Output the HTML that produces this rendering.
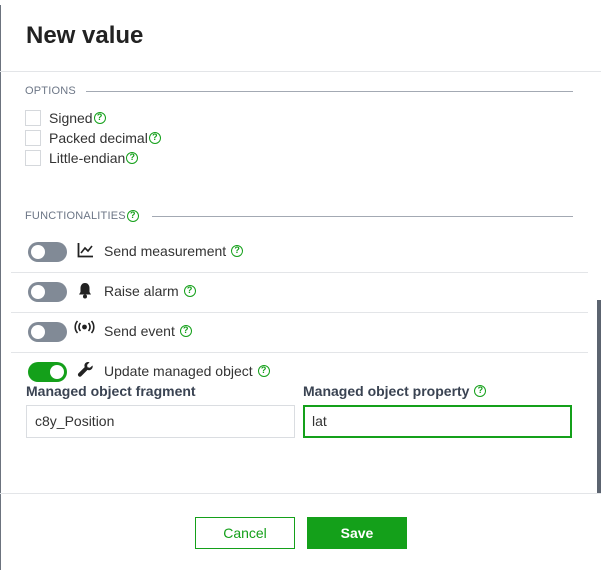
<!DOCTYPE html>
<html><head><meta charset="utf-8"><style>
*{box-sizing:border-box;margin:0;padding:0}
body{width:601px;height:570px;background:#fff;font-family:"Liberation Sans",sans-serif;color:#2b2b2b;position:relative;overflow:hidden}
.a{position:absolute}
.q{display:inline-block;width:12px;height:12px;border:1.3px solid #14a01a;border-radius:50%;color:#14a01a;font-size:9px;font-weight:bold;line-height:9.5px;text-align:center;vertical-align:top;margin-top:2px;margin-left:1px}
.cb{width:16px;height:16px;border:1px solid #d5d8dc}
.lab{font-size:14px;color:#333;line-height:16px}
.sec{font-size:11px;color:#6c7686;letter-spacing:.2px;line-height:14px}
.sec .q{margin-top:1px}
.hr{height:1px;background:#a3a9b3}
.sep{height:1px;background:#e3e5e8;left:11px;width:577px}
.tg{width:39px;height:20px;border-radius:10px;background:#818a96}
.tg::after{content:"";position:absolute;left:3px;top:3px;width:14px;height:14px;border-radius:50%;background:#fff}
.tg.on{background:#14a01a}
.tg.on::after{left:22px}
.bl{font-size:14px;font-weight:bold;color:#3a4352;line-height:16px}
.inp{height:33px;border:1px solid #dadde1;font-size:14px;padding:7px 8px;color:#333}
</style></head><body>
<div class="a" style="left:0;top:5px;width:1px;height:565px;background:#6c737e"></div>
<div class="a" style="left:26px;top:22px;font-size:24px;font-weight:bold;color:#222">New value</div>
<div class="a" style="left:0;top:71px;width:601px;height:1px;background:#e3e5e8"></div>

<div class="a sec" style="left:25px;top:84px">OPTIONS</div>
<div class="a hr" style="left:86px;top:91px;width:487px"></div>
<div class="a cb" style="left:25px;top:110px"></div><div class="a lab" style="left:49px;top:110px">Signed<span class="q">?</span></div>
<div class="a cb" style="left:25px;top:130px"></div><div class="a lab" style="left:49px;top:130px">Packed decimal<span class="q">?</span></div>
<div class="a cb" style="left:25px;top:150px"></div><div class="a lab" style="left:49px;top:150px">Little-endian<span class="q">?</span></div>

<div class="a sec" style="left:25px;top:209px">FUNCTIONALITIES<span class="q">?</span></div>
<div class="a hr" style="left:152px;top:216px;width:421px"></div>

<div class="a tg" style="left:28px;top:242px"></div>
<svg class="a" style="left:77px;top:242px" width="17" height="16" viewBox="0 0 17 16"><path d="M1.5 1v13.5H16" stroke="#222" stroke-width="1.8" fill="none"/><path d="M4 11l4-5 3 3 4-5" stroke="#222" stroke-width="1.6" fill="none"/></svg>
<div class="a lab" style="left:104px;top:243px">Send measurement <span class="q">?</span></div>
<div class="a sep" style="top:272px"></div>

<div class="a tg" style="left:28px;top:282px"></div>
<svg class="a" style="left:78px;top:282px" width="14" height="17" viewBox="0 0 14 17"><path d="M7 1c-3 0-4.5 2.5-4.5 5v4L1 12.5h12L11.5 10V6C11.5 3.5 10 1 7 1z" fill="#222"/><circle cx="7" cy="14.5" r="2" fill="#222"/></svg>
<div class="a lab" style="left:104px;top:283px">Raise alarm <span class="q">?</span></div>
<div class="a sep" style="top:312px"></div>

<div class="a tg" style="left:28px;top:322px"></div>
<svg class="a" style="left:74px;top:320px" width="21" height="14" viewBox="0 0 21 14"><circle cx="10.5" cy="7" r="2.4" fill="#222"/><path d="M6.5 3a6 6 0 0 0 0 8M14.5 3a6 6 0 0 1 0 8M3.5 1a9 9 0 0 0 0 12M17.5 1a9 9 0 0 1 0 12" stroke="#222" stroke-width="1.6" fill="none"/></svg>
<div class="a lab" style="left:104px;top:323px">Send event <span class="q">?</span></div>
<div class="a sep" style="top:352px"></div>

<div class="a tg on" style="left:28px;top:362px"></div>
<svg class="a" style="left:77px;top:361px" width="17" height="17" viewBox="0 0 17 17"><path d="M15.5 4.5l-2.6 2.2-2.4-.4-.4-2.4L12.6 1.2C10.5.4 8 1.5 7.5 3.8c-.2.9 0 1.6.2 2.3L1.5 12.3c-.8.8-.8 2 0 2.8.8.8 2 .8 2.8 0l6.2-6.2c.7.3 1.5.4 2.3.2 2.3-.5 3.4-3 2.7-4.6z" fill="#222"/></svg>
<div class="a lab" style="left:104px;top:363px">Update managed object <span class="q">?</span></div>

<div class="a bl" style="left:26px;top:383px">Managed object fragment</div>
<div class="a inp" style="left:26px;top:405px;width:269px">c8y_Position</div>
<div class="a bl" style="left:303px;top:383px">Managed object property <span class="q">?</span></div>
<div class="a inp" style="left:303px;top:405px;width:269px;border:2px solid #14a01a;padding:6px 7px">lat</div>

<div class="a" style="left:597px;top:300px;width:4px;height:193px;background:#5c6470"></div>
<div class="a" style="left:0;top:493px;width:601px;height:1px;background:#e3e5e8"></div>

<div class="a" style="left:195px;top:517px;width:100px;height:32px;border:1px solid #14a01a;color:#14a01a;font-size:14px;text-align:center;line-height:30px">Cancel</div>
<div class="a" style="left:307px;top:517px;width:100px;height:32px;background:#14a01a;color:#fff;font-size:14px;font-weight:bold;text-align:center;line-height:32px">Save</div>
</body></html>
